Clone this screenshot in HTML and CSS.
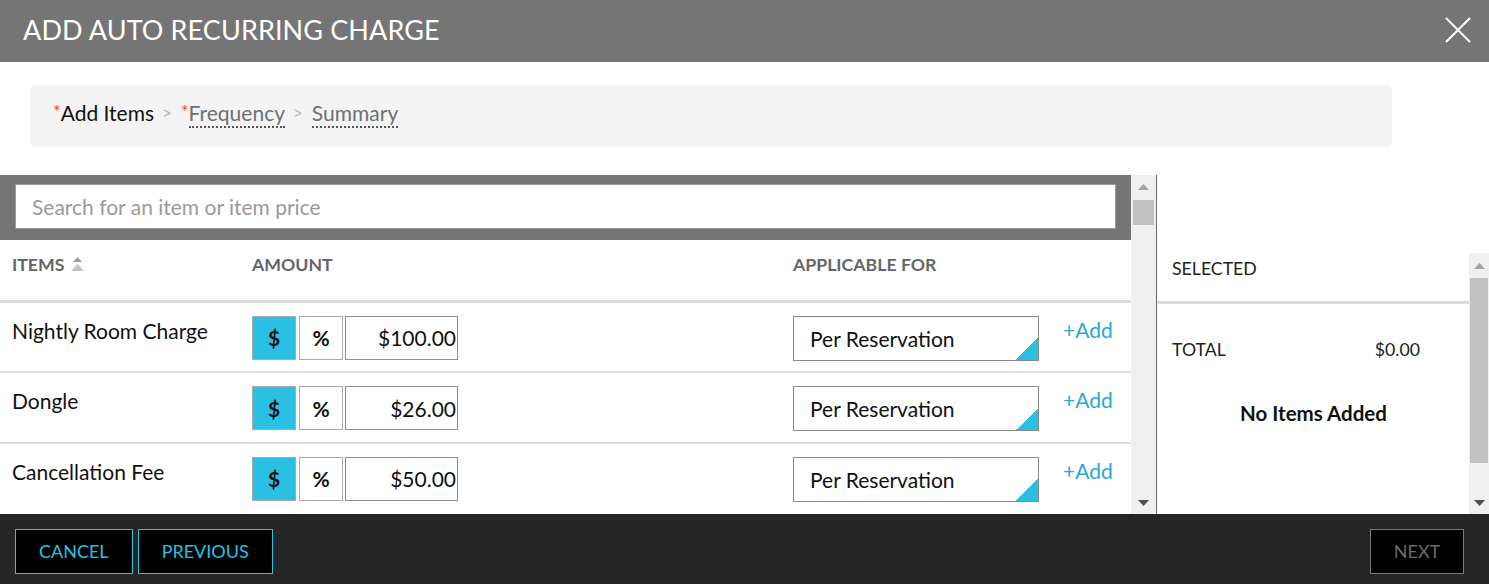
FILE: index.html
```html
<!DOCTYPE html>
<html>
<head>
<meta charset="utf-8">
<link rel="stylesheet" href="styles.css">
</head>
<body>
<div class="modal">
  <header class="head">
    <h1 class="title">ADD AUTO RECURRING CHARGE</h1>
    <svg class="close" width="26" height="26" viewBox="0 0 26 26"><path d="M1 1L25 25M25 1L1 25" stroke="#fff" stroke-width="2" fill="none"/></svg>
  </header>
  <div class="crumbwrap">
    <nav class="crumbs">
      <span class="step active"><span class="req">*</span>Add Items</span>
      <span class="sep">&gt;</span>
      <span class="step"><span class="req">*</span><span class="dot">Frequency</span></span>
      <span class="sep">&gt;</span>
      <span class="step"><span class="dot">Summary</span></span>
    </nav>
  </div>
  <main class="main">
    <section class="left">
      <div class="searchbar">
        <div class="search">Search for an item or item price</div>
      </div>
      <div class="thead">
        <div class="c-name">ITEMS <svg class="sort" width="13" height="14" viewBox="0 0 13 14"><path d="M6.5 0L11 5H2Z" fill="#9e9e9e"/><path d="M6.5 7L13 14H0Z" fill="#c4c4c4"/></svg></div>
        <div class="c-amt">AMOUNT</div>
        <div class="c-app">APPLICABLE FOR</div>
      </div>
      <div class="row">
        <div class="c-name name">Nightly Room Charge</div>
        <div class="c-amt amt"><span class="tog on">$</span><span class="tog">%</span><span class="val">$100.00</span></div>
        <div class="c-app app"><span class="sel">Per Reservation<i class="tri"></i></span><span class="add">+Add</span></div>
      </div>
      <div class="row">
        <div class="c-name name">Dongle</div>
        <div class="c-amt amt"><span class="tog on">$</span><span class="tog">%</span><span class="val">$26.00</span></div>
        <div class="c-app app"><span class="sel">Per Reservation<i class="tri"></i></span><span class="add">+Add</span></div>
      </div>
      <div class="row last">
        <div class="c-name name">Cancellation Fee</div>
        <div class="c-amt amt"><span class="tog on">$</span><span class="tog">%</span><span class="val">$50.00</span></div>
        <div class="c-app app"><span class="sel">Per Reservation<i class="tri"></i></span><span class="add">+Add</span></div>
      </div>
    </section>
    <div class="vscroll">
      <svg class="arr" width="11" height="6" viewBox="0 0 11 6"><path d="M5.5 0L11 6H0Z" fill="#a3a3a3"/></svg>
      <div class="thumb small"></div>
      <div class="grow"></div>
      <svg class="arr" width="11" height="6" viewBox="0 0 11 6"><path d="M0 0H11L5.5 6Z" fill="#505050"/></svg>
    </div>
    <section class="right">
      <div class="rtop"></div>
      <div class="rbody">
        <div class="rcontent">
          <div class="selhead">SELECTED</div>
          <div class="total"><span>TOTAL</span><span>$0.00</span></div>
          <div class="empty">No Items Added</div>
        </div>
        <div class="vscroll2">
          <svg class="arr" width="11" height="6" viewBox="0 0 11 6"><path d="M5.5 0L11 6H0Z" fill="#a3a3a3"/></svg>
          <div class="thumb big"></div>
          <div class="grow"></div>
          <svg class="arr" width="11" height="6" viewBox="0 0 11 6"><path d="M0 0H11L5.5 6Z" fill="#505050"/></svg>
        </div>
      </div>
    </section>
  </main>
  <footer class="foot">
    <button class="btn">CANCEL</button>
    <button class="btn prev">PREVIOUS</button>
    <div class="grow"></div>
    <button class="btn next">NEXT</button>
  </footer>
</div>
</body>
</html>
```
FILE: styles.css
```css
* { box-sizing: border-box; }
html, body { margin: 0; padding: 0; }
body {
  width: 1489px;
  height: 584px;
  overflow: hidden;
  font-family: Lato, "Open Sans", "Liberation Sans", sans-serif;
  background: #fff;
  color: #111;
}
.modal { display: flex; flex-direction: column; height: 584px; }
.head {
  height: 62px;
  background: #757575;
  display: flex;
  align-items: center;
  justify-content: space-between;
  padding: 0 18px 0 23px;
  flex: none;
}
.title {
  margin: 0;
  font-weight: 400;
  font-size: 27px;
  color: #fff;
  letter-spacing: 0.1px;
  padding-bottom: 3px;
}
.close { display: block; margin-bottom: 3px; }
.crumbwrap { padding: 23px 97px 28px 30px; flex: none; }
.crumbs {
  height: 62px;
  background: #f4f4f4;
  border-radius: 5px;
  display: flex;
  align-items: center;
  padding: 0 0 8px 23px;
  font-size: 21px;
  color: #707070;
}
.step.active { color: #111; }
.req { color: #f23b3b; font-size: 18px; position: relative; top: -3px; }
.sep { color: #b5b5b5; font-size: 17px; margin: 0 9px 0 8px; }
.dot { border-bottom: 2px dotted #555; padding-bottom: 1px; }
.main { display: flex; height: 339px; flex: none; }
.left { width: 1131px; flex: none; display: flex; flex-direction: column; }
.searchbar { background: #757575; height: 65px; padding: 9px 15px 11px 15px; }
.search {
  height: 45px;
  background: #fff;
  border: 1px solid #999;
  font-size: 21px;
  color: #9a9a9a;
  display: flex;
  align-items: center;
  padding: 0 16px 1px;
}
.thead {
  display: flex;
  height: 63px;
  border-bottom: 3px solid #dcdcdc;
  align-items: center;
  font-weight: 700;
  font-size: 17.7px;
  color: #666;
  padding-bottom: 11px;
}
.c-name { width: 252px; padding-left: 12px; flex: none; display: flex; align-items: center; }
.c-amt { width: 541px; flex: none; display: flex; }
.c-app { flex: 1; display: flex; }
.sort { margin-left: 7px; }
.row {
  display: flex;
  height: 71px;
  border-bottom: 2px solid #dedede;
  padding-top: 13px;
}
.row.last { border-bottom: none; }
.name { font-size: 21px; color: #111; align-items: flex-start; padding-top: 2px; }
.amt { gap: 3px; }
.tog {
  width: 44px; height: 44px;
  border: 1px solid #aaa;
  display: flex; align-items: center; justify-content: center;
  font-size: 21px; font-weight: 700; color: #111;
  background: #fff;
}
.tog.on { background: #29c0e3; }
.val {
  width: 113px; height: 44px; margin-left: -1px;
  border: 1px solid #8e8e8e;
  display: flex; align-items: center; justify-content: flex-end;
  padding-right: 1px;
  font-size: 21px; color: #111;
}
.app { align-items: flex-start; }
.sel {
  position: relative;
  width: 246px; height: 45px;
  border: 1px solid #8a8a8a;
  display: flex; align-items: center;
  padding-left: 16px;
  font-size: 21px; color: #111;
}
.tri {
  position: absolute; right: 0; bottom: 0;
  width: 22px; height: 22px;
  background: linear-gradient(to bottom right, transparent 50%, #29c0e3 50%);
}
.add { margin-left: 24px; font-size: 21px; color: #2aa6d6; margin-top: 1px; }
.vscroll {
  width: 26px; flex: none;
  background: #f0f0f0;
  border-right: 1px solid #6e6e6e;
  display: flex; flex-direction: column; align-items: center;
  padding: 9px 0 8px 0;
}
.thumb { background: #c1c1c1; }
.thumb.small { width: 21px; height: 25px; margin-top: 10px; margin-left: -1px; }
.grow { flex: 1; }
.right { flex: 1; display: flex; flex-direction: column; }
.rtop { height: 78px; flex: none; }
.rbody { flex: 1; display: flex; }
.rcontent { flex: 1; }
.selhead {
  height: 51px;
  border-bottom: 3px solid #dcdcdc;
  font-size: 17.7px; color: #222;
  padding: 5px 0 0 15px;
}
.total {
  display: flex; justify-content: space-between;
  padding: 35px 49px 0 15px;
  font-size: 17.7px; color: #222;
}
.empty {
  text-align: center; font-weight: 700; font-size: 20.5px; color: #111;
  margin-top: 41px; padding-left: 1px;
}
.vscroll2 {
  width: 20px; flex: none; background: #f0f0f0;
  display: flex; flex-direction: column; align-items: center;
  padding: 10px 0 8px 0;
}
.thumb.big { width: 18px; height: 185px; margin-top: 9px; }
.foot {
  flex: 1;
  background: #252525;
  display: flex; align-items: center;
  padding: 4px 25px 0 15px;
  gap: 5px;
}
.btn {
  height: 45px;
  background: #000;
  border: 1px solid #29c0e3;
  color: #29c0e3;
  font-family: Lato, "Open Sans", sans-serif;
  font-size: 18px;
  padding: 0 23px;
}
.btn.prev { padding: 0 23px; }
.btn.next { border-color: #7a7a7a; color: #6a6a6a; width: 94px; padding: 0; }
```
